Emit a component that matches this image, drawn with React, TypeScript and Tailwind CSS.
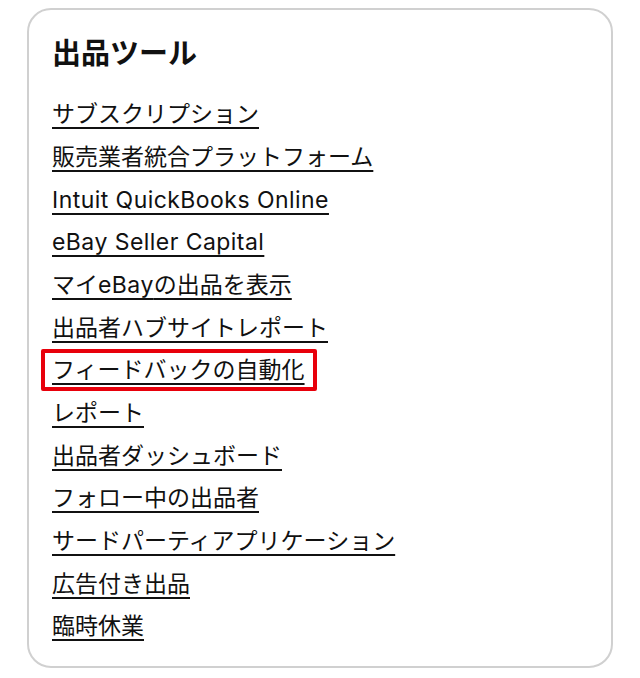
import React from "react";

const links = [
  "サブスクリプション",
  "販売業者統合プラットフォーム",
  "Intuit QuickBooks Online",
  "eBay Seller Capital",
  "マイeBayの出品を表示",
  "出品者ハブサイトレポート",
  "フィードバックの自動化",
  "レポート",
  "出品者ダッシュボード",
  "フォロー中の出品者",
  "サードパーティアプリケーション",
  "広告付き出品",
  "臨時休業",
];

function renderText(t: string) {
  const parts = t.split(/([A-Za-z][A-Za-z ]*[A-Za-z])/);
  return parts.map((p, i) =>
    /[A-Za-z]/.test(p) ? (
      <span key={i} className="tracking-[0.45px]">
        {p}
      </span>
    ) : (
      <React.Fragment key={i}>{p}</React.Fragment>
    )
  );
}

export default function App() {
  return (
    <div className="w-[640px] h-[678px] bg-white pt-[8px] pl-[27px]" style={{ fontFamily: 'Inter, "Noto Sans CJK JP", sans-serif' }}>
      <div className="w-[586px] h-[660px] border-2 border-[#d0d0d0] rounded-[24px] pt-[24px] pl-[24px] pr-[24px] pb-[18px]">
        <h2 className="text-[29px] leading-[40px] font-bold text-[#111] mb-[19px] -ml-[1px]">出品ツール</h2>
        <ul className="flex flex-col">
          {links.map((l) => (
            <li key={l} className="relative h-[42.67px] flex items-center">
              <a className="text-[23px] leading-[30px] text-[#111] underline underline-offset-[5px] decoration-[1.5px] -ml-[1px]" href="#">
                {renderText(l)}
              </a>
              {l === "フィードバックの自動化" && (
                <div className="absolute left-[-12px] top-[0px] w-[276px] h-[42px] border-[4px] border-[#e8000b] rounded-[2px]" />
              )}
            </li>
          ))}
        </ul>
      </div>
    </div>
  );
}
